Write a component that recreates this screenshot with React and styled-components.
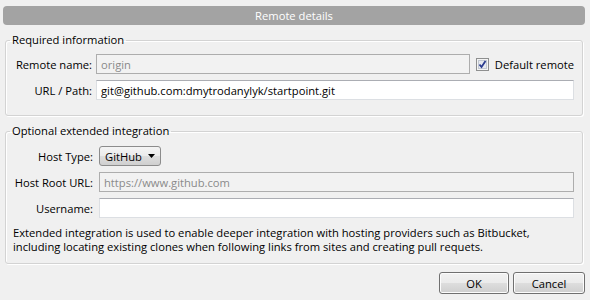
import React from 'react';
import styled, { createGlobalStyle } from 'styled-components';

const GlobalStyle = createGlobalStyle`
  html, body {
    margin: 0;
    padding: 0;
    background: #f0f0f0;
  }
  body {
    font-family: "Open Sans", "Noto Sans", sans-serif;
    font-size: 11.2px;
    color: #000;
  }
`;

const Dialog = styled.div`
  width: 590px;
  height: 300px;
  box-sizing: border-box;
  padding: 6px 5px 0 3px;
  display: flex;
  flex-direction: column;
  background: #f0f0f0;
`;

const TitleBar = styled.div`
  height: 19px;
  border-radius: 4px;
  background: #a3a3a3;
  color: #fff;
  display: flex;
  align-items: center;
  justify-content: center;
  line-height: 19px;
`;

const Group = styled.fieldset`
  margin: ${(p) => p.$top}px 2px 0 2px;
  padding: 0;
  border: 1px solid #d3d3d3;
  border-radius: 3px;
  box-shadow: inset 1px 1px 0 #fff, 1px 1px 0 #fff;
  min-width: 0;
`;

const Legend = styled.legend`
  margin-left: 4px;
  padding: 0 2px;
  line-height: 16px;
`;

const Form = styled.div`
  display: grid;
  grid-template-columns: ${(p) => p.$label}px 1fr auto;
  column-gap: ${(p) => p.$gap}px;
  row-gap: 6px;
  align-items: center;
  padding: ${(p) => p.$pad};
`;

const Label = styled.label`
  text-align: right;
  white-space: nowrap;
`;

const Input = styled.input`
  box-sizing: border-box;
  height: 20px;
  width: 100%;
  margin: 0;
  padding: 0 4px;
  font: inherit;
  color: #000;
  background: #fff;
  border: 1px solid #dcdfe3;
  border-top-color: #abadb3;
  outline: none;
  grid-column: ${(p) => (p.$span ? 'span 2' : 'auto')};

  &:disabled {
    background: #f2f2f2;
    color: #8a8a8a;
    border-color: #adadad;
  }
`;

const CheckWrap = styled.label`
  display: flex;
  align-items: center;
  gap: 6px;
  white-space: nowrap;
  padding-left: 2px;
`;

const ComboCell = styled.div`
  grid-column: span 2;
`;

const Combo = styled.div`
  box-sizing: border-box;
  width: 62px;
  height: 20px;
  display: flex;
  align-items: center;
  justify-content: space-between;
  padding: 0 5px 0 5px;
  border: 1px solid #8c8c8c;
  border-radius: 3px;
  background: linear-gradient(#f4f4f4 0%, #ebebeb 48%, #dddddd 52%, #cfcfcf 100%);
`;

const Note = styled.p`
  grid-column: 1 / -1;
  margin: 2px 0 0 -1px;
  line-height: 14px;
`;

const Footer = styled.div`
  display: flex;
  justify-content: flex-end;
  gap: 4px;
  margin-top: 8px;
`;

const Button = styled.button`
  box-sizing: border-box;
  width: ${(p) => p.$w}px;
  height: 22px;
  font: inherit;
  color: #000;
  border: 1px solid #707070;
  border-radius: 3px;
  background: linear-gradient(#f2f2f2 0%, #ebebeb 48%, #dddddd 52%, #cfcfcf 100%);
  box-shadow: inset 0 0 0 1px #fcfcfc;
  padding: 0;
`;

const Checkbox = () => (
  <svg width="13" height="13" viewBox="0 0 13 13">
    <rect x="0.5" y="0.5" width="12" height="12" fill="#f4f4f4" stroke="#8e8f8f" />
    <rect x="2.5" y="2.5" width="8" height="8" fill="#e6e9ef" stroke="#c2c8d2" />
    <path d="M3.5 6.5 L5.5 9 L9.5 3" fill="none" stroke="#2a3b8f" strokeWidth="1.8" />
  </svg>
);

const Arrow = () => (
  <svg width="7" height="4" viewBox="0 0 7 4">
    <path d="M0 0 H7 L3.5 4 Z" fill="#000" />
  </svg>
);

export default function App() {
  return (
    <>
      <GlobalStyle />
      <Dialog>
        <TitleBar>Remote details</TitleBar>

        <Group $top={7}>
          <Legend>Required information</Legend>
          <Form $label={78} $gap={4} $pad="6px 8px 15px 8px">
            <Label>Remote name:</Label>
            <Input disabled defaultValue="origin" />
            <CheckWrap>
              <Checkbox />
              Default remote
            </CheckWrap>
            <Label>URL / Path:</Label>
            <Input $span defaultValue="git@github.com:dmytrodanylyk/startpoint.git" />
          </Form>
        </Group>

        <Group $top={7}>
          <Legend>Optional extended integration</Legend>
          <Form $label={79} $gap={6} $pad="7px 8px 9px 8px">
            <Label>Host Type:</Label>
            <ComboCell>
              <Combo>
                GitHub
                <Arrow />
              </Combo>
            </ComboCell>
            <Label>Host Root URL:</Label>
            <Input $span disabled defaultValue="https://www.github.com" />
            <Label>Username:</Label>
            <Input $span defaultValue="" />
            <Note>
              Extended integration is used to enable deeper integration with hosting providers such as Bitbucket,
              <br />
              including locating existing clones when following links from sites and creating pull requets.
            </Note>
          </Form>
        </Group>

        <Footer>
          <Button $w={70}>OK</Button>
          <Button $w={72}>Cancel</Button>
        </Footer>
      </Dialog>
    </>
  );
}
